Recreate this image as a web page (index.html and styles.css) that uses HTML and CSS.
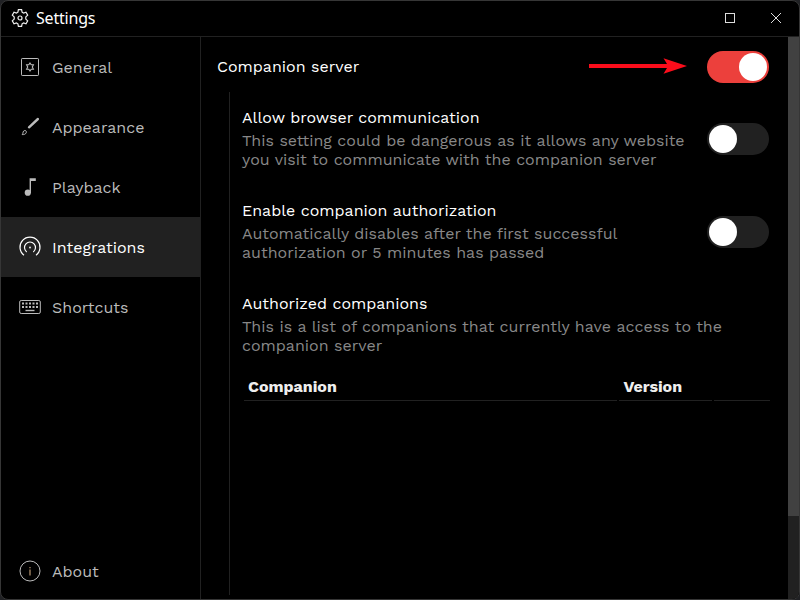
FILE: index.html
```
<!DOCTYPE html>
<html lang="en">
<head>
<meta charset="utf-8">
<title>Settings</title>
<link rel="stylesheet" href="styles.css">
</head>
<body>
<div class="window">
  <header class="titlebar">
    <svg class="gear" width="18" height="18" viewBox="0 0 18 18"><path d="M7.400.7h3.200l.5 2.500 1.500.9 2.400-.8 1.700 2.800-1.900 1.800v2.200l1.900 1.800-1.700 2.800-2.400-.8-1.500.9-.5 2.500H7.400l-.5-2.500-1.500-.9-2.400.8-1.700-2.800 1.900-1.800V7.900L1.300 6.100 3 3.300l2.400.8 1.500-.9z"/><circle cx="9" cy="9" r="2"/></svg>
    <h1>Settings</h1>
    <div class="controls">
      <svg width="12" height="12" viewBox="0 0 12 12" shape-rendering="crispEdges"><rect x="1.500" y="1.500" width="9" height="9"/></svg>
      <svg width="12" height="12" viewBox="0 0 12 12"><path d="M1 1l10 10M11 1L1 11"/></svg>
    </div>
  </header>
  <div class="body">
    <nav class="sidebar">
      <a class="item"><svg width="22" height="22" viewBox="0 0 22 22"><rect x="2.500" y="2.500" width="17" height="17" rx=".7"/><path class="star" d="M11 7l1.200 1.800h2.200L13.300 11l1.100 2.200h-2.200L11 15l-1.200-1.800H7.600L8.700 11 7.600 8.800h2.200z"/></svg><span>General</span></a>
      <a class="item"><svg width="22" height="22" viewBox="0 0 22 22"><path class="brush" d="M10 11.300L18.900 3"/><path d="M3.200 18.600c1.200-.8.300-2.400 1.500-3.600 1.500-1.300 3.300.1 2.500 1.800-.7 1.600-2.400 1.900-4 1.800z"/></svg><span>Appearance</span></a>
      <a class="item"><svg width="22" height="22" viewBox="0 0 22 22"><circle class="solid" cx="8.800" cy="16.700" r="3.100"/><path class="solid" d="M10.600 2.200h6.200v2.800h-4.800v12h-1.400z"/></svg><span>Playback</span></a>
      <a class="item active"><svg width="22" height="22" viewBox="0 0 22 22"><path class="wave" d="M5 19.200a10 10 0 1 1 12 0M7.700 15.900a5.500 5.500 0 1 1 6.600 0"/><circle class="solid" cx="11" cy="11.500" r=".9"/></svg><span>Integrations</span></a>
      <a class="item"><svg width="22" height="22" viewBox="0 0 22 22"><rect x=".7" y="4.500" width="20.600" height="13" rx="1.500"/><path class="keys" d="M3 7.500h16M3 11h16"/><path class="space" d="M6.500 14.500h9"/></svg><span>Shortcuts</span></a>
      <a class="item about"><svg width="22" height="22" viewBox="0 0 22 22"><circle cx="11" cy="11" r="10"/><path class="info" d="M11 9.500v6M11 7v1.200"/></svg><span>About</span></a>
    </nav>
    <main class="content">
      <section class="setting main-setting">
        <h2>Companion server</h2>
        <svg class="arrow" width="98" height="16" viewBox="0 0 98 16"><path d="M0 6h78L74.500 .3 98 8 74.500 15.700 78 10H0z"/></svg>
        <span class="toggle on"></span>
      </section>
      <div class="group">
        <section class="setting">
          <div class="copy"><h2>Allow browser communication</h2>
            <p>This setting could be dangerous as it allows any website you visit to communicate with the companion server</p></div>
          <span class="toggle"></span>
        </section>
        <section class="setting">
          <div class="copy"><h2>Enable companion authorization</h2>
            <p>Automatically disables after the first successful authorization or 5 minutes has passed</p></div>
          <span class="toggle"></span>
        </section>
        <section class="setting">
          <div class="copy"><h2>Authorized companions</h2>
            <p>This is a list of companions that currently have access to the companion server</p></div>
        </section>
        <div class="table"><b>Companion</b><b>Version</b><b></b></div>
      </div>
    </main>
    <div class="scrollbar"><div class="thumb"></div></div>
  </div>
</div>
</body>
</html>
```
FILE: styles.css
```
* { box-sizing: border-box; }
body {
  margin: 0;
  height: 600px;
  overflow: hidden;
  background: #202124;
  font: 16px/19px "Work Sans", Inter, sans-serif;
}
svg { fill: none; stroke: currentColor; flex: none; display: block; }
.window {
  width: 800px;
  height: 600px;
  border: 1px solid #363636;
  border-radius: 8px;
  background: #000;
  overflow: hidden;
  display: flex;
  flex-direction: column;
}
.titlebar {
  height: 36px;
  flex: none;
  border-bottom: 1px solid #212121;
  display: flex;
  align-items: center;
  padding: 0 17px 0 10px;
  color: #eee;
}
.gear { stroke-width: 1.2; margin-bottom: 1px; }
.titlebar h1 { margin: 0 0 2px 7px; font: 16px/22px "Noto Sans", sans-serif; letter-spacing: -.2px; color: #fff; }
.controls { margin: 0 0 1px auto; display: flex; gap: 34px; color: #ddd; }
.body { flex: 1; display: flex; min-height: 0; }
.sidebar {
  width: 200px;
  flex: none;
  border-right: 1px solid #212121;
  display: flex;
  flex-direction: column;
}
.item {
  height: 60px;
  padding-left: 18px;
  display: flex;
  align-items: center;
  gap: 11px;
  color: #bbb;
  white-space: nowrap;
}
.item.active { background: #212121; color: #fff; }
.item.about { margin-top: auto; height: 56px; }
.solid { fill: currentColor; stroke: none; }
.star { stroke-width: 1.1; }
.brush { stroke-width: 2.4; stroke-linecap: round; }
.wave { stroke-width: 1.2; }
.keys { stroke-width: 2; stroke-dasharray: 2 1.500; }
.space { stroke-width: 1.4; }
.info { stroke: #a18464; stroke-width: 1.4; }
.content { flex: 1; min-width: 0; padding: 14px 19px 4px 16px; display: flex; flex-direction: column; }
.setting { display: flex; justify-content: space-between; }
.setting h2 { margin: 0; font-size: 16px; line-height: 19px; font-weight: 400; color: #fff; }
.setting p { margin: 4px 0 0; color: #888; }
.copy { max-width: 484px; }
.copy:not(:only-child) { max-width: 448px; }
.main-setting { align-items: center; height: 32px; }
.main-setting h2 { margin-bottom: 2px; }
.arrow { margin: 0 20px 2px auto; fill: #fb0d1b; stroke: none; }
.toggle {
  width: 62px;
  height: 32px;
  border-radius: 16px;
  background: #212121;
  flex: none;
  padding: 2px;
  display: flex;
}
.toggle::before { content: ""; width: 28px; height: 28px; border-radius: 50%; background: #fff; }
.toggle.on { background: #ec403c; justify-content: flex-end; }
.group {
  flex: 1;
  margin: 9px 0 0 12px;
  padding: 16px 0 0 12px;
  border-left: 1px solid #212121;
}
.group .setting { height: 93px; }
.group .toggle { margin-top: 15px; }
.table {
  display: grid;
  grid-template-columns: 373.400px 92.600px 56px;
  gap: 2px;
  padding-left: 2px;
  margin-right: -1px;
  margin-top: -14px;
}
.table b { height: 28px; padding: 4px; border-bottom: 1px solid #212121; color: #eee; }
.scrollbar { width: 11px; flex: none; background: #212121; }
.thumb { height: 479px; background: #414141; }
```
